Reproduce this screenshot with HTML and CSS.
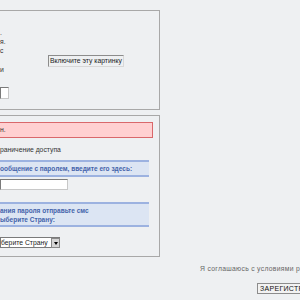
FILE: index.html
```html
<!DOCTYPE html>
<html lang="ru">
<head>
    <meta charset="UTF-8">
    <title>Регистрация</title>
    <link rel="stylesheet" href="styles.css">
</head>
<body>
    <div id="column">
        <div class="panel" id="infoPanel">
            <div class="infoText">
                <div class="line">.</div>
                <div class="line">я.</div>
                <div class="line">с</div>
                <div class="line gap">и</div>
                <input type="text" class="field tiny">
            </div>
            <div class="picture">Включите эту картинку</div>
        </div>

        <div class="panel" id="formPanel">
            <div class="error">н.</div>
            <div class="note">раничение доступа</div>
            <div class="hint">ообщение с паролем, введите его здесь:</div>
            <input type="text" class="field wide">
            <div class="hint double">ания пароля отправьте смс<br>ыберите Страну:</div>
            <div class="select">
                <span>берите Страну</span>
                <span class="arrow"></span>
            </div>
        </div>
    </div>

    <div id="footer">
        <div class="agree">Я соглашаюсь с условиями регис</div>
        <button class="submit">ЗАРЕГИСТРИ</button>
    </div>
</body>
</html>
```

FILE: styles.css
```css
html, body {
    overflow: hidden;
}
body {
    margin: 0;
    background-color: #eef0f2;
    font-family: "Liberation Sans", Arial, sans-serif;
    font-size: 6.8px;
    color: #333;
}
#column {
    width: 160px;
}
.panel {
    border: 1px solid #a8a8a8;
    border-left: none;
}
#infoPanel {
    margin-top: 10px;
    height: 98px;
    display: flex;
    align-items: flex-start;
}
.infoText {
    width: 40px;
    padding-top: 17px;
}
.line {
    height: 9px;
    line-height: 9px;
}
.gap {
    margin-top: 10px;
}
.field {
    display: block;
    box-sizing: border-box;
    margin: 0;
    padding: 0;
    height: 12px;
    background: #fff;
    border: 1px solid #8a8a8a;
    border-color: #7a7a7a #c8c8c8 #c8c8c8 #7a7a7a;
}
.tiny {
    width: 9px;
    margin-top: 13px;
}
.picture {
    margin-top: 44px;
    margin-left: 8px;
    padding: 0 1px;
    height: 10px;
    line-height: 10px;
    border: 1px solid #bbb;
    border-color: #8c8c8c #d8d8d8 #d8d8d8 #8c8c8c;
    color: #222;
    white-space: nowrap;
}
#formPanel {
    margin-top: 5px;
    height: 142px;
    padding-top: 6px;
    box-sizing: border-box;
}
.error {
    margin-right: 6px;
    height: 14px;
    line-height: 14px;
    background-color: #ffd0d1;
    border: 1px solid #d9686b;
    border-left: none;
    color: #333;
}
.note {
    margin-top: 6px;
    height: 12px;
    line-height: 12px;
}
.hint {
    margin-top: 4px;
    margin-right: 10px;
    background-color: #dce5f3;
    border-top: 2px solid #9cb2e0;
    border-bottom: 2px solid #9cb2e0;
    color: #4463aa;
    font-size: 6.5px;
    font-weight: bold;
    height: 13px;
    line-height: 13px;
}
.wide {
    width: 68px;
    margin-top: 2px;
    height: 11px;
}
.double {
    margin-top: 12px;
    line-height: 9px;
    padding-top: 2px;
    box-sizing: border-box;
    height: 25px;
}
.select {
    margin-top: 10px;
    width: 60px;
    height: 11px;
    box-sizing: border-box;
    background: #fff;
    border: 1px solid #7a7a7a;
    border-right: none;
    display: flex;
    align-items: center;
    justify-content: space-between;
    color: #222;
    line-height: 9px;
}
.arrow {
    width: 9px;
    height: 10px;
    box-sizing: border-box;
    background: #d6d6d6;
    border: 1px solid #888;
    position: relative;
}
.arrow::after {
    content: "";
    position: absolute;
    left: 2px;
    top: 3px;
    border-left: 2px solid transparent;
    border-right: 2px solid transparent;
    border-top: 3px solid #000;
}
#footer {
    padding-top: 8px;
    padding-left: 200px;
    white-space: nowrap;
}
.agree {
    font-size: 6.8px;
    letter-spacing: 0.3px;
    color: #666;
    height: 8px;
    line-height: 8px;
}
.submit {
    display: block;
    margin: 10px 0 0 57px;
    height: 11px;
    padding: 0 2px;
    font-family: "Liberation Sans", Arial, sans-serif;
    font-size: 7px;
    letter-spacing: 0.3px;
    line-height: 9px;
    background: #f2f2f2;
    border: 1px solid #8c8c8c;
    color: #111;
}
```
